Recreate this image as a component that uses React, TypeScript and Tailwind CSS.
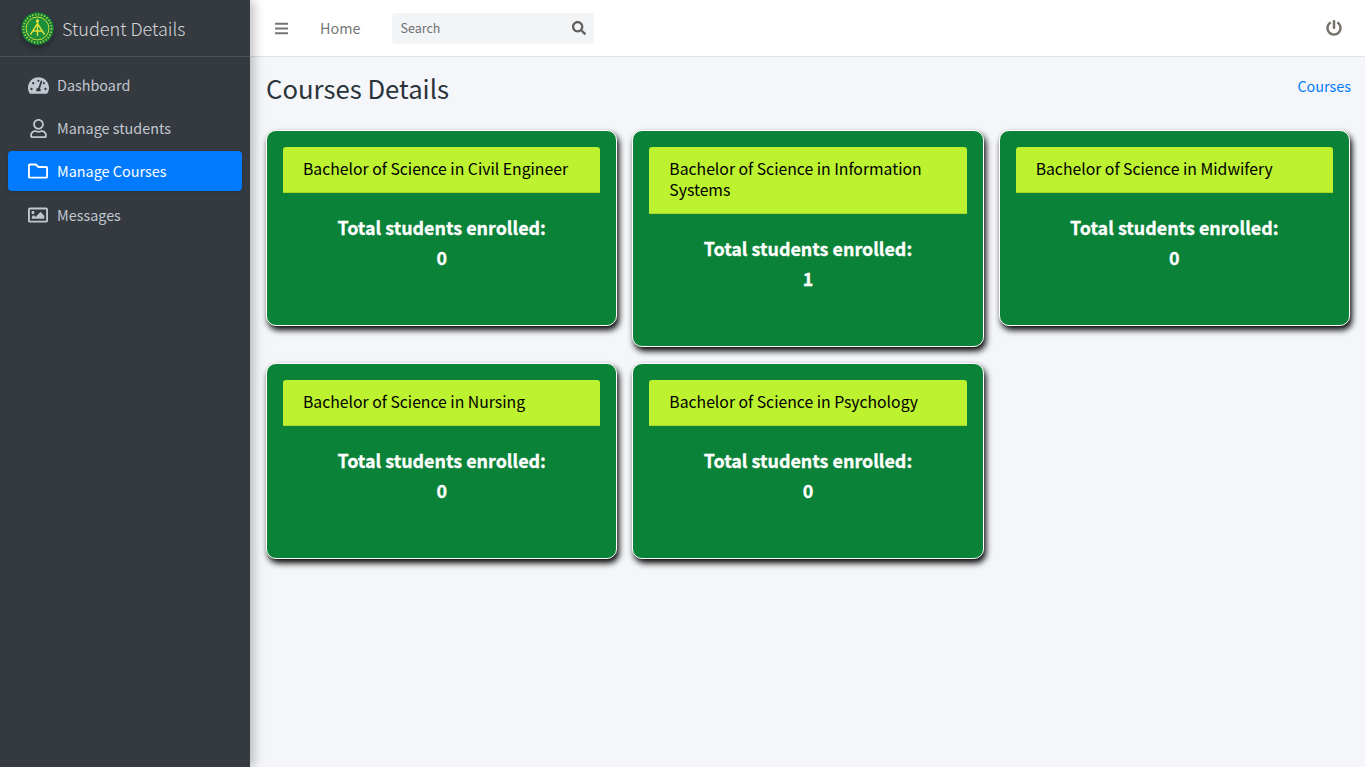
import { FaBars, FaPowerOff, FaRegFolder, FaRegImage, FaRegUser, FaSearch, FaTachometerAlt } from "react-icons/fa";

const navItems = [
  { label: "Dashboard", icon: <FaTachometerAlt size={21} /> },
  { label: "Manage students", icon: <FaRegUser size={19} /> },
  { label: "Manage Courses", icon: <FaRegFolder size={20} />, active: true },
  { label: "Messages", icon: <FaRegImage size={20} /> },
];

const courses = [
  { name: "Bachelor of Science in Civil Engineer", total: 0 },
  { name: "Bachelor of Science in Information Systems", total: 1 },
  { name: "Bachelor of Science in Midwifery", total: 0 },
  { name: "Bachelor of Science in Nursing", total: 0 },
  { name: "Bachelor of Science in Psychology", total: 0 },
];

function Logo() {
  return (
    <svg width="33" height="33" viewBox="0 0 33 33" className="rounded-full shadow-[0_3px_6px_rgba(0,0,0,0.35)]">
      <circle cx="16.5" cy="16.5" r="16.5" fill="#0f7a3a" />
      <circle cx="16.5" cy="16.5" r="14" fill="none" stroke="#9fd03a" strokeWidth="2" strokeDasharray="1.5 1.5" />
      <circle cx="16.5" cy="16.5" r="11.5" fill="#1c8f3c" stroke="#d4dc36" strokeWidth="1" />
      <path d="M16.5 7v17M9.5 22.5l7-11 7 11M11.5 19h10" fill="none" stroke="#e3e03a" strokeWidth="1.4" />
      <circle cx="16.5" cy="9" r="1.6" fill="#e3e03a" />
    </svg>
  );
}

function Sidebar() {
  return (
    <aside className="flex w-[250px] shrink-0 flex-col bg-[#343a40] shadow-[4px_0_10px_rgba(0,0,0,0.25)] z-10">
      <div className="flex h-[57px] items-center border-b border-[#4b545c] pl-[21px]">
        <Logo />
        <span className="ml-[8px] text-[18px] font-light text-[rgba(255,255,255,0.8)]">Student Details</span>
      </div>
      <nav className="flex flex-col gap-[3px] px-2 pt-2">
        {navItems.map((item) => (
          <div
            key={item.label}
            className={
              item.active
                ? "mb-[1px] flex h-[40px] items-center rounded bg-[#007bff] text-white shadow-sm"
                : "flex h-[40px] items-center rounded text-[#c2c7d0]"
            }
          >
            <span className="flex w-[24px] ml-[18px] justify-center">{item.icon}</span>
            <span className="ml-[7px] text-[14.4px]">{item.label}</span>
          </div>
        ))}
      </nav>
    </aside>
  );
}

function CourseCard({ name, total }: { name: string; total: number }) {
  return (
    <div className="rounded-[10px] border border-white bg-[#0a8238] p-4 shadow-[2px_4px_6px_#000]">
      <div className="rounded-t-[3px] bg-[#bcf22f] border-b border-[#a8d82a] px-5 pt-[11px] pb-[13px] text-[15.75px] leading-[21px] text-black">
        {name}
      </div>
      <div className="pt-[19px] pb-[37px] text-center font-bold text-white [-webkit-text-stroke:0.3px_white]">
        <div className="text-[17.9px] leading-[30px]">Total students enrolled:</div>
        <div className="text-[17.9px] leading-[30px]">{total}</div>
      </div>
    </div>
  );
}

export default function App() {
  return (
    <div className="flex h-[767px] w-full overflow-hidden bg-[#f4f6f9] font-['Noto_Sans_CJK_SC',sans-serif] text-[#212529]">
      <Sidebar />
      <div className="flex min-w-0 flex-1 flex-col">
        <header className="flex h-[57px] items-center border-b border-[#dee2e6] bg-white pl-[24px] pr-[23px]">
          <FaBars size={15} className="text-[#747474]" />
          <span className="ml-[31px] text-[14.4px] text-[#777]">Home</span>
          <div className="ml-[31px] flex h-[31px] w-[202px] items-center justify-between rounded bg-[#f2f4f6] pl-[9px] pr-[8px]">
            <span className="text-[12.5px] text-[#6c6f73]">Search</span>
            <FaSearch size={14} className="text-[#5f5f5f]" />
          </div>
          <FaPowerOff size={16} className="ml-auto text-[#77726c]" />
        </header>
        <main className="flex-1 pl-4 pr-[15px]">
          <div className="flex items-center justify-between pt-[12px] pb-[23px]">
            <h1 className="text-[25.7px] leading-[38px] font-normal text-[#2b333b]">Courses Details</h1>
            <span className="-mr-px -mt-[4px] text-[14.4px] text-[#007bff]">Courses</span>
          </div>
          <div className="grid grid-cols-3 items-start gap-x-[15px] gap-y-4">
            {courses.map((c) => (
              <CourseCard key={c.name} name={c.name} total={c.total} />
            ))}
          </div>
        </main>
      </div>
    </div>
  );
}
